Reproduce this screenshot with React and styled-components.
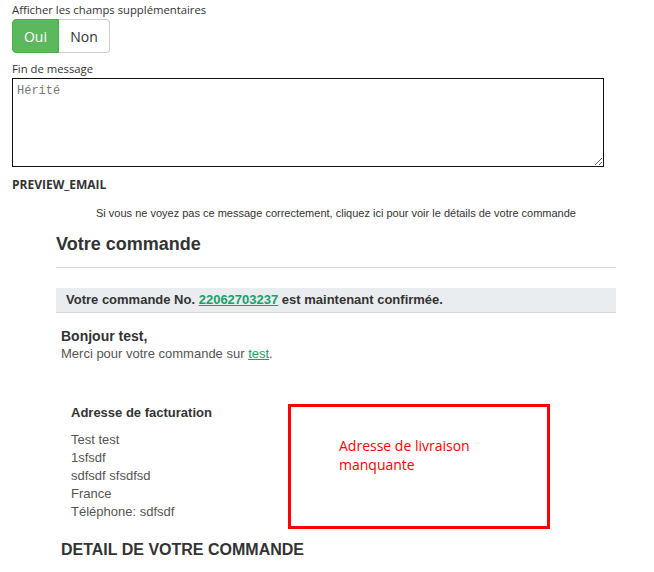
import styled, { createGlobalStyle } from "styled-components";

const GlobalStyle = createGlobalStyle`
  body {
    margin: 0;
    background: #fff;
    font-family: "Open Sans", "Noto Sans", sans-serif;
    color: #333;
  }
`;

const Page = styled.div`
  padding-left: 12px;
`;

const Label = styled.div`
  font-size: 11.3px;
  line-height: 17px;
  color: #333;
  margin-top: ${(p) => p.$top || 0}px;
  margin-bottom: ${(p) => p.$bottom || 0}px;
`;

const Toggle = styled.div`
  display: inline-flex;
  height: 34px;
`;

const ToggleBtn = styled.button`
  box-sizing: border-box;
  width: ${(p) => p.$w}px;
  height: 34px;
  font-family: inherit;
  font-size: 14px;
  padding: 0;
  cursor: pointer;
  background: ${(p) => (p.$active ? "#5cb85c" : "#fff")};
  color: ${(p) => (p.$active ? "#fff" : "#333")};
  border: 1px solid ${(p) => (p.$active ? "#4cae4c" : "#ccc")};
  border-radius: ${(p) => (p.$first ? "4px 0 0 4px" : "0 4px 4px 0")};
  ${(p) => !p.$first && "border-left: none;"}
`;

const TextArea = styled.textarea`
  display: block;
  box-sizing: border-box;
  width: 592px;
  height: 89px;
  margin: 1px 0 0;
  padding: 5px 4px;
  border: 1px solid #111;
  font-family: "Liberation Mono", monospace;
  font-size: 12px;
  &::placeholder {
    color: #777;
  }
`;

const SectionTitle = styled.div`
  margin-top: 9px;
  font-size: 12px;
  font-weight: 700;
  line-height: 17px;
  color: #333;
`;

const Email = styled.div`
  margin-left: 44px;
  width: 560px;
  font-family: "Liberation Sans", Arial, sans-serif;
  color: #333;
`;

const Preheader = styled.div`
  padding-top: 12px;
  font-size: 11px;
  line-height: 16px;
  text-align: center;
`;

const Heading = styled.h1`
  margin: 12px 0 0;
  font-size: 18px;
  line-height: 22px;
  font-weight: 700;
`;

const Rule = styled.hr`
  margin: 12px 0 0;
  border: none;
  border-top: 1px solid #dcdcdc;
`;

const Notice = styled.div`
  margin-top: 20px;
  height: 24px;
  line-height: 24px;
  padding: 0 10px;
  background: #e9edf0;
  border-bottom: 1px solid #d5d9dc;
  font-size: 13px;
  font-weight: 700;
`;

const Link = styled.a`
  color: #18a06b;
  text-decoration: underline;
  font-weight: inherit;
`;

const Greeting = styled.div`
  margin-top: 15px;
  padding-left: 5px;
  line-height: 17px;
`;

const Hello = styled.div`
  font-size: 14px;
  font-weight: 700;
  color: #333;
`;

const Thanks = styled.div`
  font-size: 13px;
  color: #555;
`;

const Addresses = styled.div`
  display: flex;
  margin-top: 42px;
  padding-left: 15px;
`;

const Billing = styled.div`
  width: 217px;
`;

const BillingTitle = styled.div`
  font-size: 13px;
  font-weight: 700;
  line-height: 16px;
  margin-top: 1px;
  margin-bottom: 10px;
`;

const Line = styled.div`
  font-size: 13px;
  line-height: 18px;
  color: #555;
`;

const MissingBox = styled.div`
  box-sizing: border-box;
  width: 262px;
  height: 125px;
  border: 3px solid #f00;
  padding: 29px 0 0 48px;
  font-family: "Open Sans", "Noto Sans", sans-serif;
  font-size: 14px;
  line-height: 19px;
  color: #f00;
`;

const DetailTitle = styled.h2`
  margin: 11px 0 0;
  padding-left: 5px;
  font-size: 16px;
  line-height: 19px;
  font-weight: 700;
`;

export default function App() {
  return (
    <>
      <GlobalStyle />
      <Page>
        <Label $top={1} $bottom={1}>
          Afficher les champs supplémentaires
        </Label>
        <Toggle>
          <ToggleBtn $active $first $w={47}>
            Oui
          </ToggleBtn>
          <ToggleBtn $w={51}>Non</ToggleBtn>
        </Toggle>
        <Label $top={7}>Fin de message</Label>
        <TextArea placeholder="Hérité" />
        <SectionTitle>PREVIEW_EMAIL</SectionTitle>
        <Email>
          <Preheader>
            Si vous ne voyez pas ce message correctement, cliquez ici pour voir
            le détails de votre commande
          </Preheader>
          <Heading>Votre commande</Heading>
          <Rule />
          <Notice>
            Votre commande No. <Link href="#">22062703237</Link> est maintenant
            confirmée.
          </Notice>
          <Greeting>
            <Hello>Bonjour test,</Hello>
            <Thanks>
              Merci pour votre commande sur <Link href="#">test</Link>.
            </Thanks>
          </Greeting>
          <Addresses>
            <Billing>
              <BillingTitle>Adresse de facturation</BillingTitle>
              <Line>Test test</Line>
              <Line>1sfsdf</Line>
              <Line>sdfsdf sfsdfsd</Line>
              <Line>France</Line>
              <Line>Téléphone: sdfsdf</Line>
            </Billing>
            <MissingBox>
              Adresse de livraison
              <br />
              manquante
            </MissingBox>
          </Addresses>
          <DetailTitle>DETAIL DE VOTRE COMMANDE</DetailTitle>
        </Email>
      </Page>
    </>
  );
}
